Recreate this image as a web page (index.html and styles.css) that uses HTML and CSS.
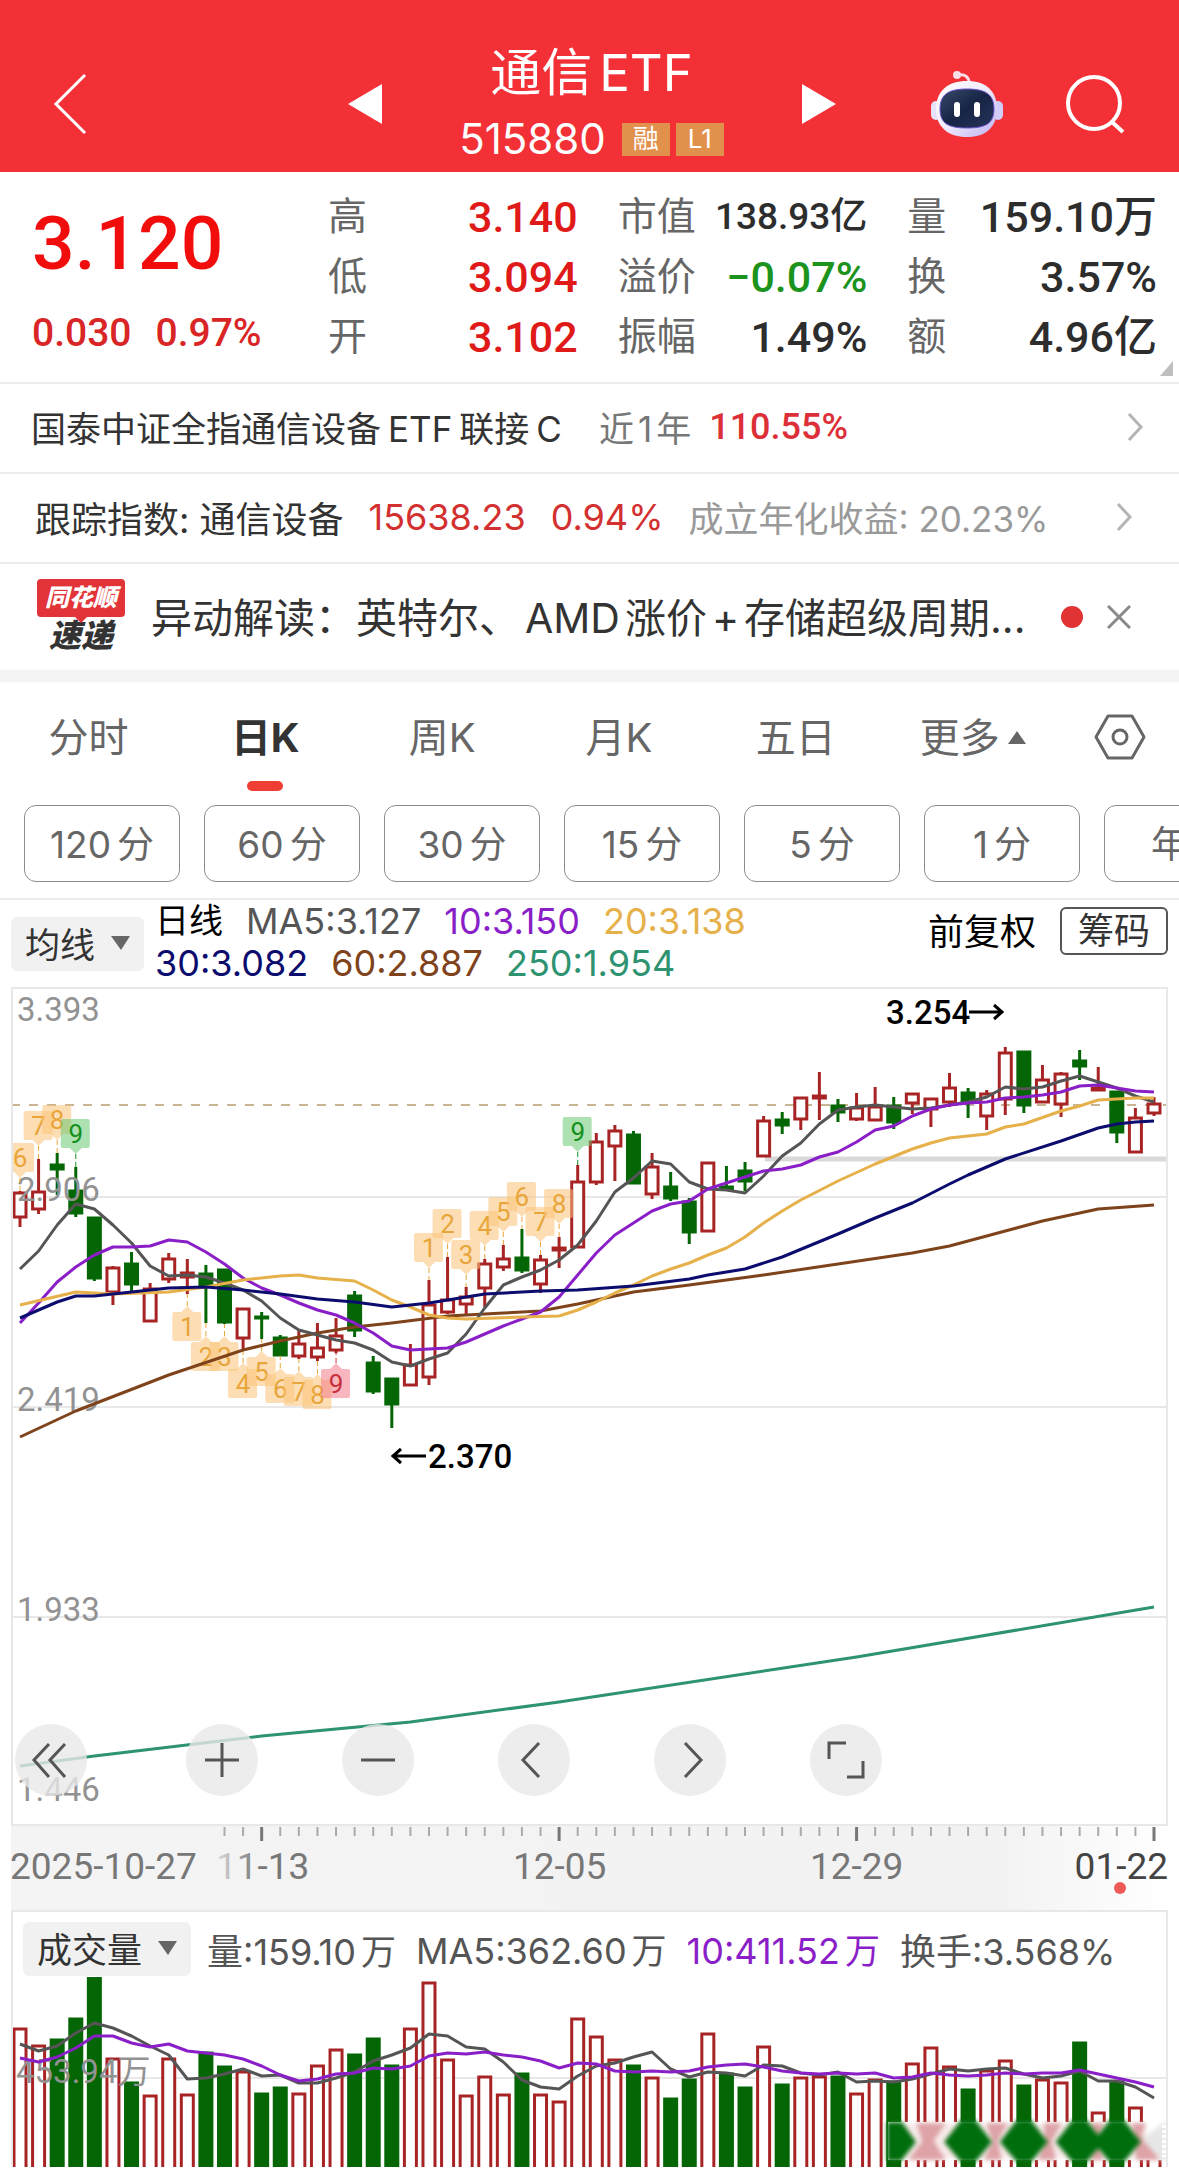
FILE: index.html
```html
<!DOCTYPE html>
<html lang="zh-CN">
<head>
    <meta charset="UTF-8">
    <meta name="viewport" content="width=device-width, initial-scale=1">
    <title>通信ETF 515880</title>
    <link rel="stylesheet" href="styles.css">
</head>
<body>
    <header class="topbar">
        <button class="icon-btn back" aria-label="返回">
            <svg width="36" height="64" viewBox="0 0 36 64"><path d="M33 3 4 32l29 29" fill="none" stroke="#fff" stroke-width="3"/></svg>
        </button>
        <div class="switcher">
            <button class="icon-btn" aria-label="上一只">
                <svg width="34" height="40" viewBox="0 0 34 40"><path d="M34 0v40L0 20z" fill="#fff"/></svg>
            </button>
            <div class="title">
                <h1>通信<span class="latin">ETF</span></h1>
                <div class="code">515880 <span class="tag">融</span><span class="tag">L1</span></div>
            </div>
            <button class="icon-btn" aria-label="下一只">
                <svg width="34" height="40" viewBox="0 0 34 40"><path d="M0 0v40l34-20z" fill="#fff"/></svg>
            </button>
        </div>
        <div class="tools">
            <button class="icon-btn" aria-label="智能助手">
                <svg width="72" height="68" viewBox="0 0 72 68">
                    <defs>
                        <linearGradient id="shell" x1="0" y1="0" x2="1" y2="1">
                            <stop offset="0" stop-color="#fff"/><stop offset=".5" stop-color="#f0ebfb"/><stop offset="1" stop-color="#bcb0f2"/>
                        </linearGradient>
                        <linearGradient id="visor" x1="0" y1="0" x2="1" y2="1">
                            <stop offset="0" stop-color="#39496a"/><stop offset=".5" stop-color="#172445"/><stop offset="1" stop-color="#27345b"/>
                        </linearGradient>
                    </defs>
                    <path d="M28 5c6-1 10 2 10 8" fill="none" stroke="#fbdfe6" stroke-width="3"/>
                    <circle cx="26" cy="5" r="4" fill="#fbdfe6"/>
                    <rect x="0" y="31" width="10" height="19" rx="5" fill="#e6e2fa"/>
                    <rect x="62" y="31" width="10" height="19" rx="5" fill="#d3ccf8"/>
                    <path d="M36 11c19 0 30 10 30 28S55 67 36 67 5 57 5 39s12-28 31-28z" fill="url(#shell)"/>
                    <path d="M36 19c18 0 27 5 27 20S54 58 36 58 9 54 9 39s9-20 27-20z" fill="url(#visor)" stroke="#6b55cf" stroke-width="1"/>
                    <rect x="23" y="32" width="6" height="15" rx="3" fill="#fff"/>
                    <rect x="43" y="32" width="6" height="15" rx="3" fill="#fff"/>
                </svg>
            </button>
            <button class="icon-btn" aria-label="搜索">
                <svg width="60" height="60" viewBox="0 0 60 60"><circle cx="29" cy="29" r="26" fill="none" stroke="#fff" stroke-width="4"/><path d="m47 48 11 10" stroke="#fff" stroke-width="4"/></svg>
            </button>
        </div>
    </header>

    <section class="quote">
        <div class="price">
            <div class="last">3.120</div>
            <div class="change"><span>0.030</span><span>0.97%</span></div>
        </div>
        <dl class="stats">
            <dt>高</dt><dd class="up">3.140</dd>
            <dt>低</dt><dd class="up">3.094</dd>
            <dt>开</dt><dd class="up">3.102</dd>
        </dl>
        <dl class="stats">
            <dt>市值</dt><dd class="small">138.93亿</dd>
            <dt>溢价</dt><dd class="down">−0.07%</dd>
            <dt>振幅</dt><dd>1.49%</dd>
        </dl>
        <dl class="stats">
            <dt>量</dt><dd>159.10万</dd>
            <dt>换</dt><dd>3.57%</dd>
            <dt>额</dt><dd>4.96亿</dd>
        </dl>
        <span class="corner"></span>
    </section>

    <a class="row" href="#">
        <span>国泰中证全指通信设备<span class="latin">ETF</span>联接<span class="latin">C</span></span>
        <span class="period">近<span class="year">1</span>年</span>
        <b class="gain">110.55%</b>
        <svg class="chevron" width="16" height="30" viewBox="0 0 16 30"><path d="m2 2 12 13L2 28" fill="none" stroke="#b5b5b5" stroke-width="3"/></svg>
    </a>
    <a class="row index-row" href="#">
        <span>跟踪指数: 通信设备</span>
        <span class="index-up">15638.23</span>
        <span class="index-up">0.94%</span>
        <span class="muted">成立年化收益: 20.23%</span>
        <svg class="chevron" width="16" height="30" viewBox="0 0 16 30"><path d="m2 2 12 13L2 28" fill="none" stroke="#b5b5b5" stroke-width="3"/></svg>
    </a>
    <div class="news">
        <div class="news-logo">
            <span class="logo-top">同花顺</span>
            <span class="logo-bottom">速递</span>
        </div>
        <a class="news-text" href="#">异动解读：英特尔、<span class="latin">AMD</span>涨价<span class="latin">+</span>存储超级周期...</a>
        <span class="dot"></span>
        <button class="icon-btn" aria-label="关闭">
            <svg width="24" height="24" viewBox="0 0 24 24"><path d="m1 1 22 22M23 1 1 23" stroke="#8a8a8a" stroke-width="3"/></svg>
        </button>
    </div>

    <nav class="tabs">
        <button class="tab">分时</button>
        <button class="tab active">日K</button>
        <button class="tab">周K</button>
        <button class="tab">月K</button>
        <button class="tab">五日</button>
        <button class="tab">更多<svg class="caret" width="18" height="13" viewBox="0 0 18 13"><path d="M9 0l9 13H0z" fill="#666"/></svg></button>
        <button class="icon-btn settings" aria-label="设置">
            <svg width="52" height="48" viewBox="0 0 52 48"><path d="M14 3h24l12 21-12 21H14L2 24z" fill="none" stroke="#666" stroke-width="3" stroke-linejoin="round"/><circle cx="26" cy="24" r="7" fill="none" stroke="#666" stroke-width="3"/></svg>
        </button>
    </nav>
    <div class="minutes">
        <button class="pill">120<span>分</span></button>
        <button class="pill">60<span>分</span></button>
        <button class="pill">30<span>分</span></button>
        <button class="pill">15<span>分</span></button>
        <button class="pill">5<span>分</span></button>
        <button class="pill">1<span>分</span></button>
        <button class="pill">年K</button>
    </div>

    <div class="ma-bar">
        <button class="picker">均线<svg width="19" height="14" viewBox="0 0 19 14"><path d="M0 0h19l-9 14z" fill="#666"/></svg></button>
        <div class="legend">
            <div><span class="black">日线</span><span class="ma5">MA5:3.127</span><span class="ma10">10:3.150</span><span class="ma20">20:3.138</span></div>
            <div><span class="ma30">30:3.082</span><span class="ma60">60:2.887</span><span class="ma250">250:1.954</span></div>
        </div>
        <span class="adjust">前复权</span>
        <button class="chips">筹码</button>
    </div>

    <section class="panel chart">
        <svg id="kline" viewBox="13 9 1153 835"></svg>
        <div class="controls">
            <button class="round first" aria-label="最早"><svg viewBox="0 0 72 72"><path d="M34 20 19 36l15 17M50 20 35 36l15 17"/></svg></button>
            <button class="round" aria-label="放大"><svg viewBox="0 0 72 72"><path d="M36 19v34M19 36h34"/></svg></button>
            <button class="round" aria-label="缩小"><svg viewBox="0 0 72 72"><path d="M19 36h34"/></svg></button>
            <button class="round" aria-label="左移"><svg viewBox="0 0 72 72"><path d="M41 19 25 36l16 17"/></svg></button>
            <button class="round" aria-label="右移"><svg viewBox="0 0 72 72"><path d="M31 19l16 17-16 17"/></svg></button>
            <button class="round" aria-label="全屏"><svg viewBox="0 0 72 72"><path d="M19 35V19h17M53 37v16H37"/></svg></button>
        </div>
    </section>
    <svg id="axis" class="axis" viewBox="11 0 1157 84"></svg>

    <section class="panel volume">
        <div class="volume-bar">
            <button class="picker">成交量<svg width="19" height="14" viewBox="0 0 19 14"><path d="M0 0h19l-9 14z" fill="#666"/></svg></button>
            <span>量:159.10<span class="unit">万</span></span>
            <span>MA5:362.60<span class="unit">万</span></span>
            <span class="ma10">10:411.52<span class="unit">万</span></span>
            <span>换手:3.568%</span>
        </div>
        <svg id="volume" viewBox="13 78 1153 190"></svg>
    </section>
    <script src="script.js"></script>
</body>
</html>
```

FILE: styles.css
```css
* {
    box-sizing: border-box;
}

body {
    margin: 0;
    overflow-x: hidden;
    background-color: #fff;
    color: #333;
    font-family: Inter, "Noto Sans CJK SC", sans-serif;
    font-size: 36px;
}

button {
    margin: 0;
    padding: 0;
    border: none;
    background: none;
    color: inherit;
    font: inherit;
    cursor: pointer;
}

a {
    color: inherit;
    text-decoration: none;
}

svg {
    display: block;
}

.icon-btn {
    display: flex;
    flex: none;
}

.latin {
    margin: 0 7px;
}

/* Header */
.topbar {
    display: grid;
    grid-template-columns: 1fr 488px 1fr;
    align-items: center;
    padding: 43px 0 7px;
    background-color: #f23036;
    color: #fff;
}

.back {
    margin-left: 52px;
}

.switcher {
    display: flex;
    align-items: center;
    justify-content: space-between;
    margin: 0 -2px 0 2px;
}

.title {
    padding-bottom: 6px;
    text-align: center;
}

.title h1 {
    margin: 0 0 16px;
    font-size: 51px;
    font-weight: 400;
    line-height: 60px;
}

.title .latin {
    margin-right: 0;
}

.code {
    display: flex;
    align-items: center;
    gap: 6px;
    font-size: 42px;
    line-height: 40px;
}

.tag {
    width: 48px;
    height: 33px;
    background-color: #e2914d;
    font-size: 26px;
    line-height: 32px;
}

.tag:first-child {
    margin-left: 10px;
}

.tools {
    display: flex;
    align-items: center;
    justify-content: flex-end;
    gap: 62px;
    padding-right: 54px;
}

/* Quote */
.quote {
    position: relative;
    display: grid;
    grid-template-columns: 256px 1fr 1fr 1fr;
    column-gap: 40px;
    padding: 15px 22px 15px 32px;
    border-bottom: 2px solid #ebebeb;
    font-family: Roboto, "Noto Sans CJK SC", sans-serif;
}

.last {
    color: #f20d0d;
    font-size: 75px;
    font-weight: 500;
    line-height: 112px;
}

.change {
    display: flex;
    gap: 24px;
    color: #d92525;
    font-size: 39px;
    font-weight: 500;
    line-height: 68px;
}

.stats {
    display: grid;
    grid-template-columns: auto 1fr;
    margin: 0;
    line-height: 60px;
}

.stats dt {
    color: #666;
    font-size: 39px;
}

.stats dd {
    margin: 0;
    color: #2d2d2d;
    font-size: 43px;
    font-weight: 500;
    text-align: right;
    white-space: nowrap;
}

.stats .small {
    font-size: 37px;
}

.stats .up {
    color: #e01919;
}

.stats .down {
    color: #1c931c;
}

.corner {
    position: absolute;
    right: 6px;
    bottom: 6px;
    border-left: 13px solid transparent;
    border-bottom: 15px solid #bfbfbf;
}

/* Link rows */
.row {
    display: flex;
    align-items: center;
    height: 90px;
    padding: 0 36px 3px 31px;
    border-bottom: 2px solid #ebebeb;
    font-size: 35px;
    white-space: nowrap;
}

.period {
    margin: 0 18px 0 30px;
    color: #777;
}

.year {
    margin: 0 4px;
}

.gain {
    color: #dd2f38;
    font-family: Roboto, sans-serif;
    font-size: 36px;
    font-weight: 500;
}

.chevron {
    margin-left: auto;
}

.index-row {
    gap: 25px;
    padding: 0 47px 3px 35px;
    font-size: 36px;
}

.index-up {
    color: #d33030;
}

.muted {
    color: #999;
    font-size: 35px;
}

.news {
    display: flex;
    align-items: center;
    height: 118px;
    padding: 0 48px 0 37px;
    border-bottom: 12px solid #f4f4f4;
}

.news .latin {
    margin: 0 5px;
}

.news-logo {
    width: 88px;
    margin-right: 26px;
    font-style: italic;
    font-weight: 900;
    text-align: center;
}

.logo-top,
.logo-bottom {
    display: block;
}

.logo-top {
    position: relative;
    border-radius: 4px;
    background-color: #e23338;
    color: #fff;
    font-size: 24px;
    line-height: 38px;
}

.logo-top::after {
    content: "";
    position: absolute;
    left: 38px;
    top: 38px;
    border: 6px solid transparent;
    border-top-color: #e23338;
    border-bottom: none;
}

.logo-bottom {
    font-size: 32px;
    line-height: 38px;
}

.news-text {
    flex: 1;
    overflow: hidden;
    padding-bottom: 4px;
    font-size: 41px;
    white-space: nowrap;
}

.dot {
    width: 22px;
    height: 22px;
    margin-right: 24px;
    border-radius: 50%;
    background-color: #e13333;
}

/* Period tabs */
.tabs {
    display: grid;
    grid-template-columns: repeat(6, 3fr) 2fr;
    height: 123px;
    color: #666;
    font-size: 40px;
}

.tab {
    position: relative;
    height: 111px;
    padding-bottom: 6px;
}

.tab.active {
    color: #333;
    font-weight: 700;
}

.tab.active::after {
    content: "";
    position: absolute;
    left: 50%;
    bottom: 2px;
    width: 36px;
    height: 10px;
    margin-left: -18px;
    border-radius: 5px;
    background-color: #ef3f35;
}

.caret {
    display: inline-block;
    margin: 0 0 8px 8px;
}

.settings {
    align-items: center;
    justify-content: center;
    height: 110px;
}

.minutes {
    display: flex;
    gap: 24px;
    overflow: hidden;
    padding: 0 0 16px 24px;
    border-bottom: 2px solid #ebebeb;
}

.pill {
    flex: none;
    width: 156px;
    height: 77px;
    padding-bottom: 4px;
    border: 1px solid #8c8c8c;
    border-radius: 12px;
    color: #666;
    font-size: 37px;
}

.pill span {
    margin-left: 6px;
}

/* Moving average legend */
.ma-bar {
    display: flex;
    align-items: center;
    height: 87px;
    padding: 0 11px;
    font-size: 36px;
}

.picker {
    display: flex;
    align-items: center;
    gap: 16px;
    height: 54px;
    padding: 0 14px 2px;
    border-radius: 6px;
    background-color: #f1f1f1;
    font-size: 35px;
}

.legend {
    margin: 0 auto 0 11px;
    padding-bottom: 3px;
    line-height: 42px;
}

.legend div {
    display: flex;
    gap: 23px;
}

.black {
    color: #000;
    font-size: 34px;
}

.ma5 {
    color: #555;
}

.ma10 {
    color: #8a1fc8;
}

.ma20 {
    color: #e6b04a;
}

.ma30 {
    color: #0c0c6e;
}

.ma60 {
    color: #7f431c;
}

.ma250 {
    color: #2e9370;
}

.adjust {
    margin: 0 24px 29px 0;
    color: #000;
    font-size: 36px;
}

.chips {
    height: 48px;
    margin-bottom: 26px;
    padding: 0 16px;
    border: 2px solid #555;
    border-radius: 6px;
    font-size: 36px;
    line-height: 40px;
}

/* Charts */
.panel {
    position: relative;
    margin: 0 11px;
    border: 2px solid #e8e8e8;
}

.panel > svg {
    width: 100%;
}

.controls {
    position: absolute;
    left: 2px;
    bottom: 28px;
    display: flex;
    gap: 84px;
}

.round {
    width: 72px;
    height: 72px;
    border-radius: 50%;
    background-color: rgba(233, 233, 233, 0.8);
}

.round.first {
    margin-right: 15px;
}

.round path {
    fill: none;
    stroke: #555;
    stroke-width: 3;
}

.axis {
    width: calc(100% - 22px);
    margin: 0 11px;
}

.volume {
    border-bottom: none;
}

.volume-bar {
    display: flex;
    align-items: center;
    gap: 20px;
    height: 65px;
    padding: 8px 10px 0;
    color: #555;
    font-size: 36px;
    white-space: nowrap;
}

.volume-bar .picker {
    margin-right: -4px;
    color: #333;
}

.unit {
    margin-left: 5px;
    font-size: 35px;
}

.grid {
    fill: none;
    stroke: #e8e8e8;
    stroke-width: 2;
}

.guide {
    stroke: #c9b593;
    stroke-width: 2;
    stroke-dasharray: 9 9;
}

.support {
    stroke: #d9d9d9;
    stroke-width: 5;
}

.rise {
    fill: #fff;
    stroke: #a82424;
    stroke-width: 3;
}

.fall {
    fill: #046604;
    stroke: #046604;
    stroke-width: 3;
}

.line {
    fill: none;
    stroke: currentColor;
    stroke-width: 3;
    stroke-linejoin: round;
}

.scale {
    fill: #929292;
    font-family: Roboto, "Noto Sans CJK SC", sans-serif;
    font-size: 33px;
}

.extreme {
    fill: #000;
    font-family: Roboto, sans-serif;
    font-size: 33px;
    font-weight: 500;
}

.arrow {
    fill: none;
    stroke: #000;
    stroke-width: 3;
}

.mark {
    font-family: Roboto, sans-serif;
    font-size: 26px;
    text-anchor: middle;
}

.stem {
    stroke-width: 1;
    stroke-dasharray: 5 3;
}

.date {
    fill: #777;
    font-family: Roboto, sans-serif;
    font-size: 37px;
}

.today {
    fill: #444;
    text-anchor: end;
}

.tick {
    stroke: #aaa;
    stroke-width: 2;
}

.tick.major {
    stroke: #777;
    stroke-width: 3;
}
```

FILE: script.js
```js
const STEP = 1134 / 61;
const xAt = i => 20 + i * STEP;

// [up, high, top, bottom, low]
const candles = [
    [1, 211, 212, 238, 247], [1, 179, 211, 230, 234], [0, 173, 184, 190, 215], [0, 187, 210, 234, 237],
    [0, 237, 237, 299, 301], [1, 286, 287, 313, 325], [0, 272, 283, 305, 312], [1, 303, 308, 342, 342],
    [1, 273, 278, 300, 303], [1, 279, 292, 298, 314], [0, 285, 293, 306, 343], [0, 289, 289, 343, 344],
    [1, 328, 328, 359, 371], [0, 332, 336, 339, 359], [0, 355, 357, 376, 376], [1, 349, 363, 377, 379],
    [1, 343, 367, 378, 381], [1, 338, 355, 371, 373], [0, 311, 315, 351, 357], [0, 376, 382, 412, 414],
    [0, 398, 398, 425, 448], [1, 364, 384, 406, 406], [1, 300, 324, 398, 405], [1, 277, 319, 333, 334],
    [1, 307, 316, 325, 336], [1, 279, 283, 309, 327], [1, 265, 278, 288, 291], [0, 249, 277, 291, 293],
    [1, 275, 279, 305, 313], [1, 257, 267, 271, 288], [1, 185, 201, 268, 268], [1, 153, 161, 203, 205],
    [1, 145, 150, 167, 201], [0, 151, 154, 204, 204], [1, 173, 186, 215, 219], [0, 192, 206, 219, 221],
    [0, 218, 221, 253, 264], [1, 182, 182, 252, 252], [0, 186, 206, 210, 210], [0, 182, 190, 202, 211],
    [1, 136, 140, 177, 177], [0, 132, 139, 146, 154], [1, 117, 117, 140, 150], [1, 92, 115, 119, 140],
    [0, 119, 125, 133, 142], [1, 113, 127, 140, 141], [1, 107, 126, 141, 141], [0, 117, 125, 143, 149],
    [1, 113, 113, 124, 134], [1, 118, 118, 130, 147], [1, 93, 107, 123, 127], [0, 108, 112, 122, 138],
    [1, 110, 113, 137, 150], [1, 67, 72, 120, 135], [0, 71, 71, 126, 133], [1, 85, 99, 123, 123],
    [1, 92, 93, 125, 137], [0, 70, 80, 87, 100], [1, 87, 107, 111, 111], [0, 111, 111, 153, 163],
    [1, 128, 137, 173, 173], [1, 117, 123, 134, 136]
];

const ma5 = [289, 271, 245, 224, 229, 245, 263, 286, 296, 295, 297, 303, 310, 321, 338, 350, 355, 360, 363, 370, 382,
    386, 379, 373, 354, 328, 305, 297, 290, 280, 265, 241, 212, 198, 181, 184, 202, 209, 210, 213, 196, 176, 163, 144,
    130, 127, 125, 127, 129, 128, 125, 122, 117, 107, 109, 107, 101, 96, 102, 108, 116, 122];
const ma10 = [343, 323, 302, 287, 275, 267, 267, 266, 260, 262, 272, 284, 298, 308, 315, 323, 330, 335, 343, 353, 366,
    370, 369, 368, 362, 354, 346, 339, 332, 317, 295, 273, 255, 243, 231, 224, 221, 209, 203, 197, 191, 189, 185, 177,
    172, 162, 150, 146, 136, 129, 125, 123, 122, 118, 117, 115, 112, 106, 105, 108, 111, 112];

// slower averages as [index, y] pairs
const ma20 = [[0, 325], [3, 312], [5, 314], [8, 312], [10, 307], [12, 300], [14, 296], [15, 295], [16, 298], [18, 301],
    [19, 310], [20, 320], [21, 327], [22, 335], [23, 338], [24, 339], [27, 337], [29, 336], [30, 330], [31, 322],
    [32, 313], [33, 305], [34, 296], [35, 289], [36, 283], [37, 275], [38, 268], [39, 257], [40, 243], [41, 231],
    [42, 220], [44, 201], [46, 184], [48, 169], [49, 163], [50, 158], [52, 154], [53, 147], [54, 144], [56, 131],
    [57, 126], [58, 120], [60, 118], [61, 118]];
const ma30 = [[0, 338], [2, 322], [3, 316], [4, 316], [6, 312], [8, 308], [10, 307], [12, 310], [14, 314], [16, 319],
    [18, 322], [20, 327], [22, 323], [25, 314], [28, 311], [30, 310], [33, 306], [36, 299], [37, 295], [39, 289],
    [41, 277], [44, 254], [46, 238], [48, 223], [50, 204], [51, 195], [53, 179], [56, 161], [58, 148], [59, 144],
    [60, 142], [61, 141]];
const ma60 = [[0, 457], [3, 431], [8, 395], [12, 370], [14, 361], [16, 353], [18, 347], [20, 343], [23, 336],
    [26, 333], [28, 331], [30, 324], [33, 312], [36, 305], [40, 295], [44, 284], [48, 273], [50, 266], [53, 251],
    [55, 241], [58, 229], [61, 225]];
const ma250 = [[0, 786], [4, 776], [13, 756], [21, 742], [29, 722], [45, 677], [61, 627]];

// nine-turn marks: [index, box top, number, below the candle]
const marks = [
    [0, 163, 6, 0], [1, 131, 7, 0], [2, 125, 8, 0], [3, 139, 9, 0],
    [9, 332, 1, 1], [10, 362, 2, 1], [11, 362, 3, 1], [12, 389, 4, 1], [13, 377, 5, 1],
    [14, 394, 6, 1], [15, 397, 7, 1], [16, 400, 8, 1], [17, 389, 9, 1],
    [22, 253, 1, 0], [23, 229, 2, 0], [24, 260, 3, 0], [25, 231, 4, 0], [26, 217, 5, 0],
    [27, 202, 6, 0], [28, 227, 7, 0], [29, 209, 8, 0], [30, 137, 9, 0]
];

const volumes = [129, 146, 140, 119, 78, 159, 183, 196, 159, 195, 153, 167, 172, 194, 188, 194, 166, 150, 155, 139, 166,
    129, 83, 160, 196, 177, 195, 174, 195, 202, 119, 137, 160, 166, 178, 199, 180, 134, 174, 188, 147, 185, 178, 177,
    177, 194, 180, 182, 164, 148, 167, 190, 171, 161, 186, 180, 183, 143, 213, 182, 208, 255];
const vol5 = [145, 152, 147, 134, 124, 129, 137, 147, 156, 180, 179, 175, 170, 177, 176, 184, 184, 179, 173, 162, 156,
    149, 135, 137, 148, 150, 163, 181, 188, 190, 177, 167, 164, 158, 153, 170, 178, 173, 174, 177, 166, 167, 174, 176,
    173, 183, 182, 183, 180, 175, 170, 172, 170, 169, 175, 179, 177, 172, 182, 182, 188, 199];
const vol10 = [159, 163, 158, 149, 137, 137, 144, 148, 145, 152, 154, 156, 160, 167, 176, 182, 180, 175, 174, 169, 170,
    167, 157, 154, 155, 153, 156, 158, 162, 169, 164, 165, 172, 173, 172, 173, 172, 168, 166, 165, 168, 172, 174, 175,
    174, 175, 174, 179, 178, 174, 176, 177, 176, 174, 175, 174, 174, 171, 175, 179, 183, 188];

const line = (data, cls) => {
    const points = data.map((d, i) => Array.isArray(d) ? `${xAt(d[0])},${d[1]}` : `${xAt(i)},${d}`);
    return `<polyline class="line ${cls}" points="${points.join(' ')}"/>`;
};

function drawKline() {
    let out = '<path class="grid" d="M13 217h1153M13 427h1153M13 637h1153"/>';
    out += '<path class="guide" d="M11 125h1157"/><path class="support" d="M765 179h401"/>';

    candles.forEach(([up, high, top, bottom, low], i) => {
        const x = xAt(i);
        const cls = up ? 'rise' : 'fall';
        out += `<path class="${cls}" d="M${x} ${high}V${top}M${x} ${bottom}V${low}"/>`;
        out += `<rect class="${cls}" x="${x - 6}" y="${top + 1}" width="12" height="${Math.max(bottom - top - 2, 1)}"/>`;
    });

    out += '<g class="scale"><text x="17" y="41">3.393</text><text x="17" y="221">2.906</text>' +
        '<text x="17" y="431">2.419</text><text x="17" y="641">1.933</text><text x="17" y="821">1.446</text></g>';

    marks.forEach(([i, y, n, below]) => {
        const x = xAt(i);
        let fill = '#fbc277';
        let ink = '#e8a53a';
        if (n === 9) {
            fill = below ? '#f27a88' : '#6cc873';
            ink = below ? '#c8303a' : '#159020';
        }
        const tip = below ? y - 6 : y + 35;
        const end = below ? candles[i][4] : candles[i][1];
        const base = below ? y : y + 29;
        out += `<path class="stem" stroke="${ink}" d="M${x} ${tip}V${end}"/>`;
        out += `<g fill="${fill}" fill-opacity=".55"><rect x="${x - 15}" y="${y}" width="29" height="29" rx="2"/>` +
            `<path d="M${x - 6} ${base}h12L${x} ${tip}z"/></g>`;
        out += `<text class="mark" fill="${ink}" x="${x}" y="${y + 24}">${n}</text>`;
    });

    out += line(ma250, 'ma250') + line(ma60, 'ma60') + line(ma5, 'ma5') +
        line(ma10, 'ma10') + line(ma20, 'ma20') + line(ma30, 'ma30');

    out += '<text class="extreme" x="886" y="44">3.254</text><path class="arrow" d="M969 32h33m-8-7 8 7-8 7"/>';
    out += '<text class="extreme" x="428" y="488">2.370</text><path class="arrow" d="M426 476h-33m8-7-8 7 8 7"/>';
    document.getElementById('kline').innerHTML = out;
}

function drawAxis() {
    let out = '<defs><linearGradient id="fade"><stop offset="0" stop-color="#f4f4f4"/>' +
        '<stop offset=".85" stop-color="#f2f2f2"/><stop offset="1" stop-color="#fff"/></linearGradient>' +
        '<linearGradient id="digit"><stop offset="0" stop-color="#ddd"/><stop offset=".45" stop-color="#777"/></linearGradient></defs>';
    out += '<rect x="11" width="1157" height="84" fill="url(#fade)"/>';
    for (let i = 11; i < 62; i++) {
        const major = (i - 13) % 16 === 0;
        out += `<path class="tick${major ? ' major' : ''}" d="M${xAt(i)} 1v${major ? 14 : 9}"/>`;
    }
    out += '<text class="date" x="10" y="53">2025-10-27</text>' +
        '<text class="date" x="216" y="53" style="fill:url(#digit)">11-13</text>' +
        '<text class="date" x="513" y="53">12-05</text>' +
        '<text class="date" x="810" y="53">12-29</text>' +
        '<text class="date today" x="1168" y="53">01-22</text>' +
        '<circle cx="1120" cy="62" r="6" fill="#ee5b57"/>';
    document.getElementById('axis').innerHTML = out;
}

function drawVolume() {
    let out = '<path class="grid" d="M13 179h1153"/>';
    volumes.forEach((top, i) => {
        const cls = candles[i][0] ? 'rise' : 'fall';
        out += `<rect class="${cls}" x="${xAt(i) - 6}" y="${top + 1}" width="12" height="200"/>`;
    });

    // smudged strip over the last bars
    out += '<defs><filter id="soft"><feGaussianBlur stdDeviation="2"/></filter></defs>' +
        '<rect x="888" y="223" width="278" height="38" fill="#fff"/>' +
        '<g filter="url(#soft)"><rect x="890" y="225" width="256" height="34" fill="#f8eaea"/>' +
        '<path d="M916 224h30l-12 18 12 19h-38l14-19zM986 224h22l-10 18 4 19h-18l8-19zM1044 224h18l-10 18 4 19h-18l6-19zM1090 224h14l-6 18 6 19h-14l6-19zM1132 224h14l-4 12 18 25h-24z" fill="#dea3a7"/>' +
        '<path d="M1142 240l24-18v40h-4z" fill="#e6e6e6"/></g>' +
        '<g filter="url(#soft)" fill="#046e08">';
    out += '<path d="M887 223h15l14 20-15 19h-14z"/>';
    [51, 54, 57, 59].forEach(i => {
        const x = xAt(i);
        out += `<path d="M${x - 7} 221h14l17 22-17 20h-14l-17-20z"/>`;
    });
    out += '</g><path d="M1164 226v32" stroke="#fff" stroke-width="4" stroke-dasharray="3 2"/>';

    out += '<text class="scale" x="16" y="184">453.94万</text>';
    out += line(vol5, 'ma5') + line(vol10, 'ma10');
    document.getElementById('volume').innerHTML = out;
}

drawKline();
drawAxis();
drawVolume();
```
